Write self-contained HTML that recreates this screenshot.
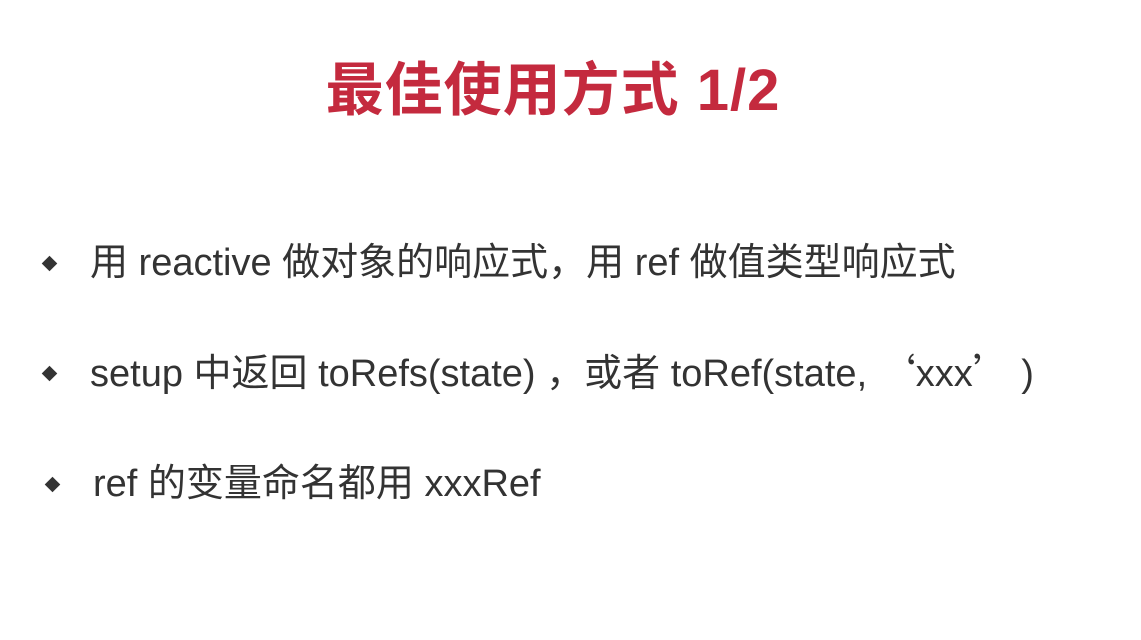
<!DOCTYPE html>
<html><head><meta charset="utf-8"><style>
html,body{margin:0;padding:0;background:#fff;width:1141px;height:640px;overflow:hidden;position:relative}
.t{position:absolute;left:0;width:1106px;text-align:center;top:56px;font:bold 58px "Liberation Sans","Noto Sans CJK SC",sans-serif;color:#c42a3e;white-space:nowrap;line-height:70px;letter-spacing:1px}
.l{position:absolute;white-space:nowrap;font:38px "Liberation Sans","Noto Sans CJK SC",sans-serif;color:#333;line-height:46px}
.q{font-family:"Noto Sans CJK SC",sans-serif}
.b{position:absolute;width:11px;height:11px;background:#333;transform:rotate(45deg)}
</style></head><body>
<div class="t">最佳使用方式 1/2</div>
<div class="b" style="left:44px;top:258px"></div>
<div class="l" style="left:90px;top:240px">用 reactive 做对象的响应式，用 ref 做值类型响应式</div>
<div class="b" style="left:44px;top:368px"></div>
<div class="l" style="left:90px;top:347px">setup 中返回 toRefs(state) ，或者 toRef(state, <span class="q">‘</span>xxx<span class="q">’</span> )</div>
<div class="b" style="left:47px;top:479px"></div>
<div class="l" style="left:93px;top:461px">ref 的变量命名都用 xxxRef</div>
</body></html>
